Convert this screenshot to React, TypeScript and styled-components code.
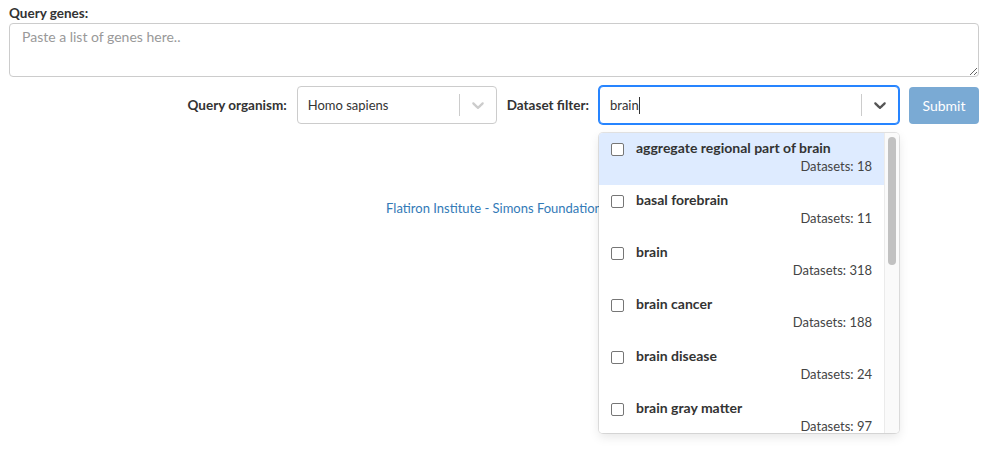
import React from "react";
import styled, { createGlobalStyle } from "styled-components";

const Global = createGlobalStyle`
  html, body { margin: 0; padding: 0; background: #fff; }
  body { font-family: "Lato", "Noto Sans", sans-serif; color: #333; }
  * { box-sizing: border-box; }
`;

const Page = styled.div`
  width: 988px;
  height: 454px;
  padding: 5px 9px 0 9px;
  position: relative;
`;

const FieldLabel = styled.label`
  display: block;
  font-size: 13.5px;
  font-weight: 700;
  color: #333;
  line-height: 16px;
  margin-bottom: 2px;
`;

const GenesInput = styled.textarea`
  display: block;
  width: 970px;
  height: 54px;
  border: 1px solid #ccc;
  border-radius: 4px;
  padding: 4px 12px;
  font-family: inherit;
  font-size: 14px;
  color: #555;
  resize: vertical;
  &::placeholder { color: #999; }
`;

const Controls = styled.div`
  display: flex;
  justify-content: flex-end;
  align-items: center;
  gap: 10px;
  margin-top: 9px;
  height: 38px;
`;

const InlineLabel = styled.span`
  font-size: 13.5px;
  font-weight: 700;
  color: #333;
`;

const SelectWrap = styled.div<{ $w: number }>`
  position: relative;
  width: ${(p) => p.$w}px;
`;

const SelectBox = styled.div<{ $focused?: boolean }>`
  display: flex;
  align-items: center;
  height: 38px;
  width: 100%;
  border-radius: 4px;
  border: 1px solid ${(p) => (p.$focused ? "#2684ff" : "#ccc")};
  box-shadow: ${(p) => (p.$focused ? "0 0 0 1px #2684ff" : "none")};
  background: #fff;
`;

const Value = styled.div`
  flex: 1;
  padding: 0 10px;
  font-size: 13px;
  color: #333;
  display: flex;
  align-items: center;
`;

const Caret = styled.span`
  display: inline-block;
  width: 1px;
  height: 17px;
  background: #333;
`;

const Separator = styled.span`
  width: 1px;
  align-self: stretch;
  margin: 7px 0;
  background: #ccc;
`;

const Indicator = styled.div<{ $dark?: boolean }>`
  display: flex;
  padding: 8px;
  color: ${(p) => (p.$dark ? "#555" : "#ccc")};
`;

const SubmitButton = styled.button`
  width: 70px;
  height: 37px;
  border: none;
  border-radius: 4px;
  background: #7aaad4;
  color: #fff;
  font-family: inherit;
  font-size: 14px;
`;

const Footer = styled.div`
  text-align: center;
  margin-top: 76px;
  font-size: 13px;
  color: #337ab7;
`;

const Menu = styled.div`
  position: absolute;
  top: 47px;
  left: 0;
  width: 100%;
  height: 300px;
  background: #fff;
  border-radius: 4px;
  box-shadow: 0 0 0 1px rgba(0, 0, 0, 0.1), 0 4px 11px rgba(0, 0, 0, 0.1);
  overflow: hidden;
  z-index: 2;
  display: flex;
`;

const OptionList = styled.div`
  flex: 1;
  overflow: hidden;
`;

const ScrollTrack = styled.div`
  width: 15px;
  background: #fafafa;
  border-left: 1px solid #ebebeb;
  padding: 4px 3px 0 3px;
`;

const ScrollThumb = styled.div`
  height: 128px;
  border-radius: 4px;
  background: #c1c1c1;
`;

const Option = styled.div<{ $active?: boolean }>`
  height: 52px;
  padding: 7px 12px 0 12px;
  background: ${(p) => (p.$active ? "#deebff" : "#fff")};
  display: grid;
  grid-template-columns: 13px 1fr;
  column-gap: 12px;
`;

const Check = styled.span`
  width: 13px;
  height: 13px;
  margin-top: 3px;
  border: 1px solid #767676;
  border-radius: 2px;
  background: #fff;
`;

const OptionText = styled.div`
  display: flex;
  flex-direction: column;
`;

const OptionName = styled.span`
  font-size: 14px;
  font-weight: 700;
  color: #333;
  line-height: 16px;
`;

const OptionCount = styled.span`
  align-self: flex-end;
  font-size: 13px;
  color: #444;
  line-height: 16px;
  margin-top: 2px;
`;

const Chevron = () => (
  <svg width="20" height="20" viewBox="0 0 20 20" fill="currentColor">
    <path d="M4.516 7.548c0.436-0.446 1.043-0.481 1.576 0l3.908 3.747 3.908-3.747c0.533-0.481 1.141-0.446 1.574 0 0.436 0.445 0.408 1.197 0 1.615-0.406 0.418-4.695 4.502-4.695 4.502-0.217 0.223-0.502 0.335-0.787 0.335s-0.57-0.112-0.789-0.335c0 0-4.287-4.084-4.695-4.502s-0.436-1.170 0-1.615z" />
  </svg>
);

const options: [string, number][] = [
  ["aggregate regional part of brain", 18],
  ["basal forebrain", 11],
  ["brain", 318],
  ["brain cancer", 188],
  ["brain disease", 24],
  ["brain gray matter", 97],
];

export default function App() {
  return (
    <Page>
      <Global />
      <FieldLabel>Query genes:</FieldLabel>
      <GenesInput placeholder="Paste a list of genes here.." />
      <Controls>
        <InlineLabel>Query organism:</InlineLabel>
        <SelectWrap $w={200}>
          <SelectBox>
            <Value>Homo sapiens</Value>
            <Separator />
            <Indicator>
              <Chevron />
            </Indicator>
          </SelectBox>
        </SelectWrap>
        <InlineLabel>Dataset filter:</InlineLabel>
        <SelectWrap $w={300}>
          <SelectBox $focused>
            <Value>
              brain
              <Caret />
            </Value>
            <Separator />
            <Indicator $dark>
              <Chevron />
            </Indicator>
          </SelectBox>
          <Menu>
            <OptionList>
              {options.map(([name, n], i) => (
                <Option key={name} $active={i === 0}>
                  <Check />
                  <OptionText>
                    <OptionName>{name}</OptionName>
                    <OptionCount>Datasets: {n}</OptionCount>
                  </OptionText>
                </Option>
              ))}
            </OptionList>
            <ScrollTrack>
              <ScrollThumb />
            </ScrollTrack>
          </Menu>
        </SelectWrap>
        <SubmitButton>Submit</SubmitButton>
      </Controls>
      <Footer>Flatiron Institute - Simons Foundation</Footer>
    </Page>
  );
}
